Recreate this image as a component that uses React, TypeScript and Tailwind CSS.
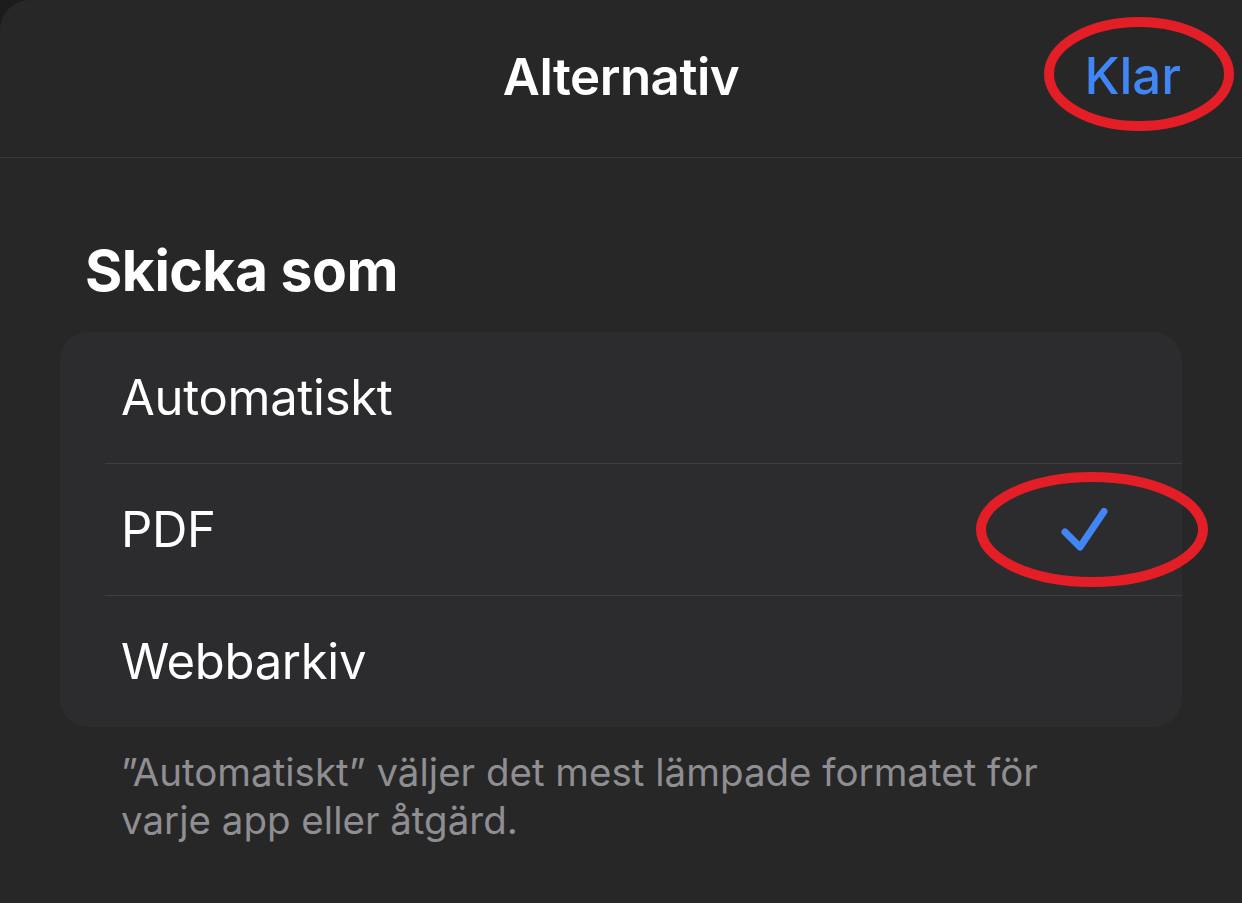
import type React from "react"

const options = ["Automatiskt", "PDF", "Webbarkiv"]

const Check: React.FC = () => (
  <svg width="56" height="56" viewBox="0 0 56 56" fill="none" className="block">
    <path
      d="M9 30 L24 45 L48 9.5"
      stroke="#4086f4"
      strokeWidth="7"
      strokeLinecap="round"
      strokeLinejoin="round"
    />
  </svg>
)

// red hand-drawn annotation rings on top of the screenshot
const Ring: React.FC<{ className: string; w: number; h: number }> = ({ className, w, h }) => (
  <svg width={w} height={h} viewBox={`0 0 ${w} ${h}`} className={`absolute pointer-events-none ${className}`}>
    <ellipse cx={w / 2} cy={h / 2} rx={w / 2 - 6} ry={h / 2 - 6} fill="none" stroke="#e31e26" strokeWidth="10" />
  </svg>
)

export default function App() {
  return (
    <div
      className="relative w-[1242px] h-[903px] overflow-hidden bg-[#1c1c1d] text-white"
      style={{ fontFamily: "Inter, 'Noto Sans', sans-serif" }}
    >
      <div className="h-full bg-[#272727] rounded-tl-[30px]">
        {/* header */}
        <div className="relative h-[158px] flex items-center justify-center border-b border-[#3b3b3d]">
          <h1 className="text-[51px] font-semibold tracking-[-0.5px] leading-none pb-[4px]">Alternativ</h1>
          <button className="absolute right-[61px] top-0 h-[150px] flex items-center text-[51px] font-medium text-[#4086f4] leading-none">
            Klar
          </button>
        </div>

        {/* section */}
        <h2 className="mt-[77px] ml-[85px] text-[57px] font-bold leading-[72px] tracking-[-0.5px]">Skicka som</h2>

        <div className="mt-[25px] mx-[60px] rounded-[28px] bg-[#2c2c2e] overflow-hidden">
          {options.map((o, i) => (
            <div key={o} className={`flex ${i > 0 ? "border-t border-[#3e3e40] ml-[45px]" : "ml-[45px]"}`}>
              <div className="flex-1 h-[131px] flex items-center justify-between pl-[16px] pr-[70px]">
                <span className="text-[49px] leading-none tracking-[-0.3px]">{o}</span>
                {o === "PDF" && <Check />}
              </div>
            </div>
          ))}
        </div>

        <p className="mt-[21px] ml-[121px] w-[960px] text-[38.5px] leading-[48px] text-[#8e8e93]">
          ”Automatiskt” väljer det mest lämpade formatet för varje app eller åtgärd.
        </p>
      </div>

      <Ring className="left-[1043px] top-[16px]" w={192} h={116} />
      <Ring className="left-[975px] top-[471px]" w={234} h={117} />
    </div>
  )
}
